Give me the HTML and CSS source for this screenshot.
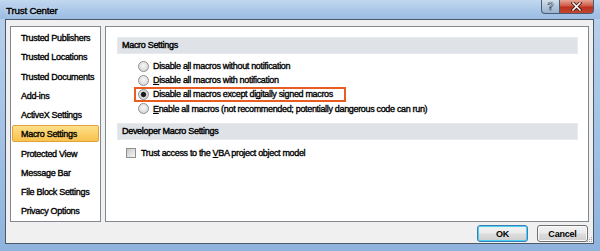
FILE: index.html
```html
<!DOCTYPE html>
<html lang="en">
<head>
    <meta charset="UTF-8">
    <meta name="viewport" content="width=device-width, initial-scale=1.0">
    <title>Trust Center</title>
    <link rel="stylesheet" href="styles.css">
</head>
<body>
    <div class="window">
        <div class="titlebar">
            <span class="title">Trust Center</span>
            <div class="caption-buttons">
                <span class="cap-btn help">?</span>
                <span class="cap-btn close">
                    <svg width="11" height="9" viewBox="0 0 11 9">
                        <path d="M2 1 L9 8 M9 1 L2 8" stroke="#3a1510" stroke-width="3.2" stroke-linecap="square"/>
                        <path d="M2 1 L9 8 M9 1 L2 8" stroke="#ffffff" stroke-width="1.6" stroke-linecap="square"/>
                    </svg>
                </span>
            </div>
        </div>

        <div class="dialog">
            <div class="panels">
                <ul class="nav">
                    <li>Trusted Publishers</li>
                    <li>Trusted Locations</li>
                    <li>Trusted Documents</li>
                    <li>Add-ins</li>
                    <li>ActiveX Settings</li>
                    <li class="active">Macro Settings</li>
                    <li>Protected View</li>
                    <li>Message Bar</li>
                    <li>File Block Settings</li>
                    <li>Privacy Options</li>
                </ul>

                <div class="pane">
                    <div class="section-head">Macro Settings</div>
                    <div class="options">
                        <label class="option"><span class="radio"></span><span>Disable a<u>l</u>l macros without notification</span></label>
                        <label class="option"><span class="radio"></span><span><u>D</u>isable all macros with notification</span></label>
                        <label class="option marked"><span class="radio checked"></span><span>Disable all macros except di<u>g</u>itally signed macros</span></label>
                        <label class="option"><span class="radio"></span><span><u>E</u>nable all macros (not recommended; potentially dangerous code can run)</span></label>
                    </div>

                    <div class="section-head">Developer Macro Settings</div>
                    <label class="check-row"><span class="checkbox"></span><span>Trust access to the <u>V</u>BA project object model</span></label>
                </div>
            </div>

            <div class="footer">
                <button class="btn default">OK</button>
                <button class="btn">Cancel</button>
            </div>

            <svg class="grip" width="7" height="7" viewBox="0 0 7 7">
                <rect x="5" y="1" width="1" height="1" fill="#a0a0a0"/>
                <rect x="3" y="3" width="1" height="1" fill="#a0a0a0"/>
                <rect x="5" y="3" width="1" height="1" fill="#a0a0a0"/>
                <rect x="1" y="5" width="1" height="1" fill="#a0a0a0"/>
                <rect x="3" y="5" width="1" height="1" fill="#a0a0a0"/>
                <rect x="5" y="5" width="1" height="1" fill="#a0a0a0"/>
            </svg>
        </div>
    </div>
</body>
</html>
```

FILE: styles.css
```css
body {
    margin: 0;
    font-family: "Liberation Sans", Arial, sans-serif;
    font-size: 9px;
    color: #000;
}

.window {
    width: 600px;
    height: 251px;
    display: flex;
    flex-direction: column;
    background: linear-gradient(180deg, #b9d1ec 0%, #a8c6e7 40%, #8fb3dd 100%);
    box-sizing: border-box;
}

.titlebar {
    height: 19px;
    display: flex;
    justify-content: space-between;
    align-items: flex-start;
    padding: 0 6px 0 6px;
    background: linear-gradient(180deg, #c2d8ef 0%, #aac7e8 55%, #9bbce2 100%);
}

.title {
    font-size: 9.8px;
    letter-spacing: -0.2px;
    -webkit-text-stroke: 0.4px #000;
    color: #000;
    line-height: 19px;
    padding-top: 1px;
    text-shadow: 0 0 4px rgba(255, 255, 255, 0.9);
}

.caption-buttons {
    display: flex;
}

.cap-btn {
    height: 13px;
    border: 1px solid #4a5c74;
    border-top: none;
    display: flex;
    align-items: center;
    justify-content: center;
    box-sizing: content-box;
}

.help {
    width: 17px;
    border-radius: 0 0 0 4px;
    border-right: none;
    background: linear-gradient(180deg, #d3e0ee 0%, #b3c7de 50%, #9bb3cf 100%);
    font-size: 10px;
    font-weight: bold;
    color: #fff;
    -webkit-text-stroke: 0.6px #2c3a4c;
}

.close {
    width: 33px;
    border-radius: 0 0 4px 0;
    background: linear-gradient(180deg, #e7a597 0%, #cf5b47 45%, #b8321f 55%, #c4462e 100%);
}

.dialog {
    position: relative;
    flex: 1;
    margin: 0 6px 7px 5px;
    border: 1px solid #4d5868;
    background: #f0f0f0;
    padding: 6px 4px 0 4px;
    display: flex;
    flex-direction: column;
}

.panels {
    display: flex;
    gap: 4px;
    height: 196px;
}

.nav {
    list-style: none;
    margin: 0;
    padding: 2px 0 0 0;
    width: 89px;
    background: #fff;
    border: 1px solid #828790;
}

.nav li {
    height: 17px;
    line-height: 17px;
    margin: 0 1px 2.25px 1px;
    padding-left: 8px;
    border: 1px solid transparent;
    box-sizing: border-box;
    letter-spacing: -0.3px;
    -webkit-text-stroke: 0.35px #000;
    white-space: nowrap;
}

.nav li.active {
    background: linear-gradient(180deg, #fde08a 0%, #fbd06a 50%, #f8c24f 100%);
    border-color: #e0a43a;
    border-radius: 2px;
}

.pane {
    flex: 1;
    background: #fff;
    border: 1px solid #828790;
    padding: 10px 10px 0 11px;
}

.section-head {
    height: 15px;
    line-height: 15px;
    background: #dfe3e8;
    border: 1px solid #e6e9ed;
    padding-left: 4px;
    letter-spacing: -0.3px;
    -webkit-text-stroke: 0.4px #000;
}

.options {
    padding: 5px 0 7px 21px;
}

.option {
    position: relative;
    height: 14.2px;
    display: flex;
    align-items: center;
    letter-spacing: -0.33px;
    -webkit-text-stroke: 0.35px #000;
    white-space: nowrap;
}

.option.marked::after {
    content: "";
    position: absolute;
    left: -4px;
    top: 0;
    width: 208px;
    height: 11px;
    border: 2px solid #ea5d22;
}

.radio {
    width: 9px;
    height: 9px;
    border-radius: 50%;
    border: 1px solid #8f8f8f;
    background: radial-gradient(circle at 50% 40%, #f6f6f6 0%, #e2e2e2 55%, #c9c9c9 100%);
    margin-right: 4px;
    flex-shrink: 0;
}

.radio.checked {
    background: radial-gradient(circle, #1a1a1a 0 2px, #5d6f85 2.6px, #e0e0e0 3.2px, #cfcfcf 100%);
}

.check-row {
    display: flex;
    align-items: center;
    padding: 8px 0 0 9px;
    letter-spacing: -0.33px;
    -webkit-text-stroke: 0.35px #000;
}

.checkbox {
    width: 8px;
    height: 8px;
    border: 1px solid #8e8f8f;
    background: linear-gradient(135deg, #c8c8c8 0%, #e4e4e4 60%, #f4f4f4 100%);
    margin-right: 5px;
}

u {
    text-decoration-thickness: 1px;
    text-underline-offset: 1px;
}

.footer {
    display: flex;
    justify-content: flex-end;
    gap: 9px;
    padding: 3px 1px 0 0;
}

.btn {
    width: 51px;
    height: 17px;
    padding: 0;
    font-family: "Liberation Sans", Arial, sans-serif;
    font-size: 9px;
    font-weight: bold;
    letter-spacing: -0.2px;
    color: #000;
    border: 1px solid #707070;
    border-radius: 3px;
    background: linear-gradient(180deg, #f2f2f2 0%, #ebebeb 48%, #dddddd 52%, #cfcfcf 100%);
    box-shadow: inset 0 0 0 1px #fbfbfb;
}

.btn.default {
    border-color: #3c7fb1;
    box-shadow: inset 0 0 0 1px #48d0f6;
}

.grip {
    position: absolute;
    right: 0;
    bottom: 0;
}
```
